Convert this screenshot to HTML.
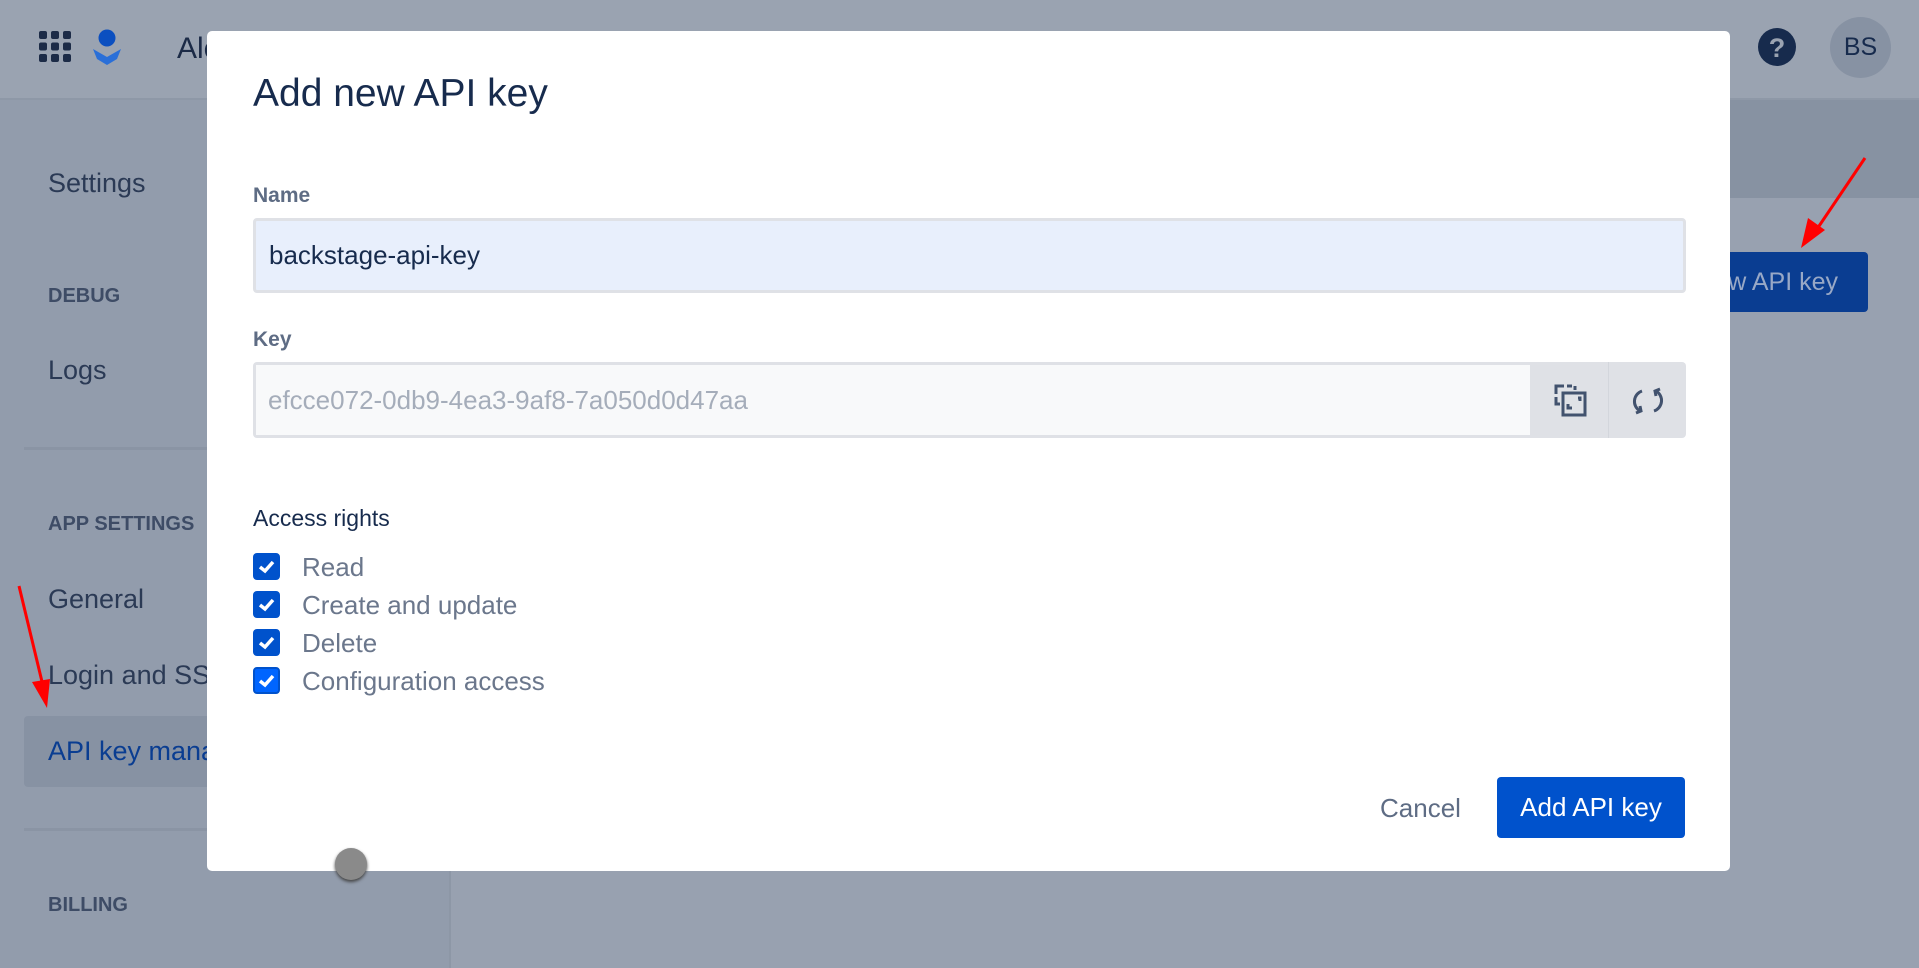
<!DOCTYPE html>
<html><head><meta charset="utf-8"><style>
*{box-sizing:border-box;margin:0;padding:0}
body{width:1919px;height:968px;overflow:hidden;background:#98a1b0;font-family:"Liberation Sans",sans-serif;position:relative}
.abs{position:absolute}
.hdr{left:0;top:0;width:1919px;height:100px;background:#9aa3b1;border-bottom:2px solid #8e98a7}
.side{left:0;top:100px;width:451px;height:868px;background:#929cac;border-right:2px solid #8d97a6}
.band{left:451px;top:100px;width:1468px;height:98px;background:#8792a2}
.sec{color:#3e4c66;font-weight:bold;font-size:20px}
.item{color:#2b3a55;font-size:27px}
.modal{left:207px;top:31px;width:1523px;height:840px;background:#fff;border-radius:5px}
.lbl{color:#5e6c84;font-size:21px;font-weight:bold}
.cb{width:27px;height:27px;background:#0052cc;border-radius:4px}
.cb svg{position:absolute;left:5px;top:6px}
.ct{color:#6b778c;font-size:26px;left:302px}
</style></head><body>
<div class="abs hdr"></div>
<svg class="abs" style="left:39px;top:31px" width="32" height="31">
<g fill="#1c2b47">
<rect x="0" y="0" width="8" height="8" rx="2"/><rect x="12" y="0" width="8" height="8" rx="2"/><rect x="24" y="0" width="8" height="8" rx="2"/>
<rect x="0" y="11.5" width="8" height="8" rx="2"/><rect x="12" y="11.5" width="8" height="8" rx="2"/><rect x="24" y="11.5" width="8" height="8" rx="2"/>
<rect x="0" y="23" width="8" height="8" rx="2"/><rect x="12" y="23" width="8" height="8" rx="2"/><rect x="24" y="23" width="8" height="8" rx="2"/>
</g></svg>
<svg class="abs" style="left:92px;top:29px" width="30" height="36"><circle cx="15" cy="9" r="8.5" fill="#0b4fc0"/><path d="M1 20 L15 28 L29 20 L25 30 L15 36 L5 30Z" fill="#2a6fd8"/></svg>
<div class="abs" style="left:177px;top:32px;font-size:30px;color:#1c2b47">Ale</div>
<svg class="abs" style="left:1757px;top:27px" width="40" height="40"><circle cx="20" cy="20" r="19" fill="#172b4d"/><text x="20" y="30" text-anchor="middle" font-family="Liberation Sans" font-weight="bold" font-size="27" fill="#9aa3b1">?</text></svg>
<div class="abs" style="left:1830px;top:17px;width:61px;height:61px;border-radius:50%;background:#8792a3;color:#172b4d;font-size:25px;text-align:center;line-height:61px">BS</div>
<div class="abs side"></div>
<div class="abs band"></div>
<div class="abs item" style="left:48px;top:168px">Settings</div>
<div class="abs sec" style="left:48px;top:285px">DEBUG</div>
<div class="abs item" style="left:48px;top:355px">Logs</div>
<div class="abs" style="left:24px;top:447px;width:427px;height:3px;background:#8a94a4"></div>
<div class="abs sec" style="left:48px;top:513px">APP SETTINGS</div>
<div class="abs item" style="left:48px;top:584px">General</div>
<div class="abs item" style="left:48px;top:660px">Login and SSO</div>
<div class="abs" style="left:24px;top:716px;width:427px;height:71px;background:#8792a3;border-radius:4px"></div>
<div class="abs item" style="left:48px;top:736px;color:#0a3d91">API key management</div>
<div class="abs" style="left:24px;top:828px;width:427px;height:3px;background:#8a94a4"></div>
<div class="abs sec" style="left:48px;top:894px">BILLING</div>
<div class="abs" style="left:1600px;top:252px;width:268px;height:60px;background:#0a3d91;border-radius:4px;color:#98a8c6;font-size:25px;line-height:60px;text-align:right;padding-right:30px">New API key</div>
<svg class="abs" style="left:0;top:0" width="1919" height="968">
<line x1="1865" y1="158" x2="1815" y2="232" stroke="#f00" stroke-width="3"/>
<path d="M1801 248 L1808 218 L1825 230Z" fill="#f00"/>
<line x1="19" y1="586" x2="44" y2="690" stroke="#f00" stroke-width="3"/>
<path d="M47 708 L32 682 L50 679Z" fill="#f00"/>
</svg>
<div class="abs modal">
<div class="abs" style="left:46px;top:41px;font-size:39px;color:#172b4d">Add new API key</div>
<div class="abs lbl" style="left:46px;top:153px">Name</div>
<div class="abs" style="left:46px;top:187px;width:1433px;height:75px;background:#e8effc;border:3px solid #dfe1e6;border-radius:4px;font-size:26px;color:#172b4d;padding-left:13px;line-height:69px">backstage-api-key</div>
<div class="abs lbl" style="left:46px;top:297px">Key</div>
<div class="abs" style="left:46px;top:331px;width:1433px;height:76px;background:#dfe1e6;border-radius:4px"></div>
<div class="abs" style="left:49px;top:334px;width:1274px;height:70px;background:#f8f9fa;font-size:26px;color:#a5adba;padding-left:12px;line-height:70px">efcce072-0db9-4ea3-9af8-7a050d0d47aa</div>
<div class="abs" style="left:1401px;top:331px;width:1px;height:76px;background:#d3d6dc"></div>
<svg class="abs" style="left:1347px;top:353px" width="34" height="34" fill="none" stroke="#42526e" stroke-width="3"><path d="M2 10 V2 H10 M13 2 H18 M21 2 V6 M2 13 V20 H6"/><rect x="9" y="9" width="22" height="22"/><path d="M14 20 V24 H18 M24 14 H26 V17"/></svg>
<svg class="abs" style="left:1425px;top:354px" width="32" height="32" fill="none" stroke="#42526e" stroke-width="3"><path d="M10 6 A11 11 0 0 0 8 26"/><path d="M4 28 L9 26 L8 21"/><path d="M22 26 A11 11 0 0 0 24 6"/><path d="M28 4 L23 6 L24 11"/></svg>
<div class="abs" style="left:46px;top:474px;font-size:23px;color:#172b4d">Access rights</div>
<div class="abs cb" style="left:46px;top:522px"><svg width="17" height="15"><path d="M2 8 L7 12 L15 3" stroke="#fff" stroke-width="3.5" fill="none"/></svg></div>
<div class="abs cb" style="left:46px;top:560px"><svg width="17" height="15"><path d="M2 8 L7 12 L15 3" stroke="#fff" stroke-width="3.5" fill="none"/></svg></div>
<div class="abs cb" style="left:46px;top:598px"><svg width="17" height="15"><path d="M2 8 L7 12 L15 3" stroke="#fff" stroke-width="3.5" fill="none"/></svg></div>
<div class="abs cb" style="left:46px;top:636px;background:#0065ff;border:2px solid #0052cc"><svg width="17" height="15" style="left:3px;top:4px"><path d="M2 8 L7 12 L15 3" stroke="#fff" stroke-width="3.5" fill="none"/></svg></div>
<div class="abs ct" style="left:95px;top:521px">Read</div>
<div class="abs ct" style="left:95px;top:559px">Create and update</div>
<div class="abs ct" style="left:95px;top:597px">Delete</div>
<div class="abs ct" style="left:95px;top:635px">Configuration access</div>
<div class="abs" style="left:1173px;top:762px;font-size:26px;color:#5e6c84">Cancel</div>
<div class="abs" style="left:1290px;top:746px;width:188px;height:61px;background:#0052cc;border-radius:4px;color:#fff;font-size:26px;text-align:center;line-height:61px">Add API key</div>
</div>
<div class="abs" style="left:335px;top:848px;width:32px;height:32px;border-radius:50%;background:#8a8a8a;box-shadow:0 2px 3px #444"></div>
</body></html>
